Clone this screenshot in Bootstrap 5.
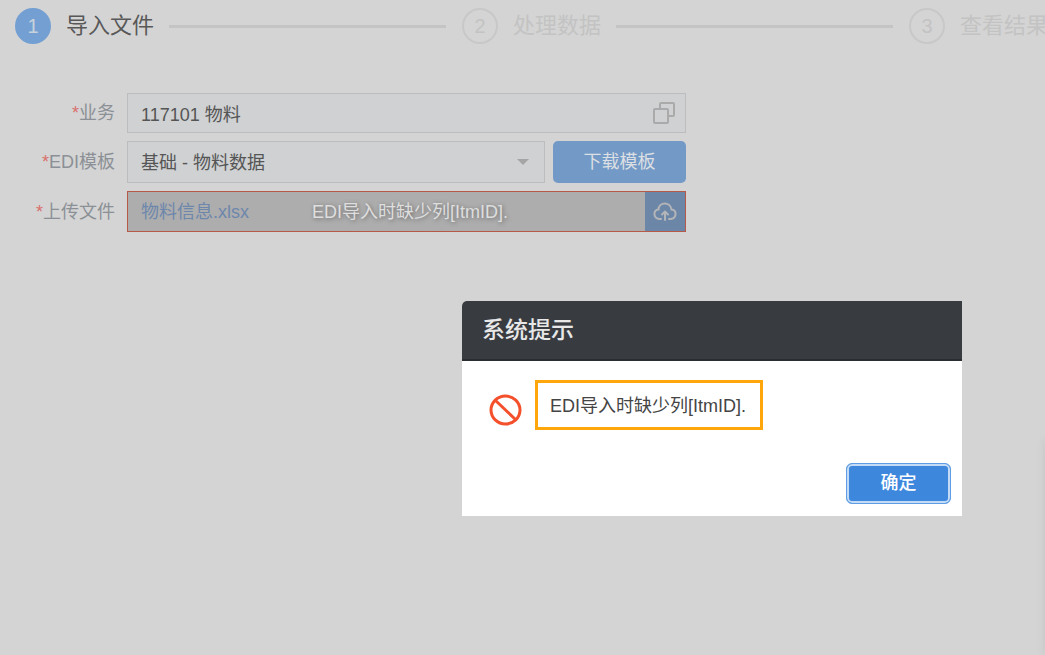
<!DOCTYPE html>
<html lang="zh-CN">
<head>
<meta charset="utf-8">
<meta name="viewport" content="width=device-width, initial-scale=1">
<title>导入文件</title>
<link href="https://cdn.jsdelivr.net/npm/bootstrap@5.3.0/dist/css/bootstrap.min.css" rel="stylesheet">
<style>
  body { background: #d4d4d4; color: #555; font-family: "Liberation Sans", "Noto Sans CJK SC", sans-serif; font-size: 18px; line-height: 26px; min-height: 100vh; }
  /* step bar */
  .steps { padding: 8px 0 0 15px; margin-right: -3px; color: #c3c3c3; font-size: 22px; line-height: 36px; }
  .step-title { margin-left: 15px; }
  .step-no { width: 36px; height: 36px; border: 2px solid #c8c8c8; font-size: 20px; }
  .step-on .step-no { background: #739fd2; border-color: #739fd2; color: #c9d2dc; }
  .step-on .step-title { color: #585858; }
  .step-line { height: 3px; background: #c4c4c4; margin: 0 16px 0 15px; }
  /* form */
  .import-form { width: 686px; max-width: 100%; padding-top: 49px; gap: 8px; }
  .form-line { gap: 12px; }
  .field-label { width: 115px; color: #8b9096; text-align: right; }
  .field-label span { color: #d9706c; }
  .field { height: 40px; border: 1px solid #bcbdbe; background-color: #cfd1d3; color: #555; border-radius: 0; font-size: 18px; padding: 0 13px; }
  .field-tall { height: 42px; padding-top: 2px; }
  select.field { background-image: url("data:image/svg+xml,%3Csvg xmlns='http://www.w3.org/2000/svg' viewBox='0 0 12 6'%3E%3Cpath d='M0 0h12L6 6z' fill='%23a5a5a5'/%3E%3C/svg%3E"); background-size: 12px 6px; background-position: right 15px center; }
  .pick { right: 10px; color: #aaa; }
  .btn-template { width: 133px; height: 42px; background: #739ac6; color: #dcdfe3; font-size: 18px; border: 0; border-radius: 5px; }
  .upload { height: 41px; border: 1px solid #b55a48; background: #adadad; }
  .upload a { color: #6d87ac; padding-left: 13px; }
  .upload-error { color: #dedede; text-shadow: 1px 1px 4px #666; pointer-events: none; right: 177px; }
  .btn-upload { width: 40px; background: #6b86a6; color: #b3b5b8; }
  /* message dialog */
  .dialog-layer { padding: 301px 83px 0 0; pointer-events: none; }
  .message-box { width: 500px; border: 0; border-radius: 5px 0 0 0; background: #fff; pointer-events: auto; }
  .message-head { background: #383c41; border-bottom: 2px solid #2a2e33; padding: 0 20px; height: 60px; border-radius: 5px 0 0 0; }
  .message-head h1 { font-size: 23px; line-height: 32px; color: #e8e8e8; font-weight: 500; }
  .message-body { padding: 19px 27px 0; gap: 13px; }
  .message-text { border: 3px solid #ffa60a; padding: 10px 12px; height: 50px; width: 228px; color: #444; white-space: nowrap; }
  .message-foot { padding: 33px 11px 12px; }
  .btn-ok { width: 105px; height: 41px; background: #3d87dc; color: #fff; border: 1px solid #5f9de3; border-radius: 6px; box-shadow: inset 0 0 0 2px #c3dbf6; font-size: 18px; font-weight: 500; }
  .side-panel { right: -10px; top: 440px; bottom: 0; width: 10px; box-shadow: 0 0 8px #c4c4c4; }
</style>
</head>
<body class="position-relative overflow-hidden">
<main>
  <div class="steps d-flex align-items-center text-nowrap">
    <div class="step-on d-flex flex-shrink-0"><span class="step-no rounded-circle d-flex align-items-center justify-content-center">1</span><span class="step-title">导入文件</span></div>
    <div class="step-line flex-fill"></div>
    <div class="d-flex flex-shrink-0"><span class="step-no rounded-circle d-flex align-items-center justify-content-center">2</span><span class="step-title">处理数据</span></div>
    <div class="step-line flex-fill"></div>
    <div class="d-flex flex-shrink-0"><span class="step-no rounded-circle d-flex align-items-center justify-content-center">3</span><span class="step-title">查看结果</span></div>
  </div>

  <form class="import-form d-flex flex-column">
    <div class="form-line d-flex align-items-center">
      <label class="field-label flex-shrink-0" for="biz"><span>*</span>业务</label>
      <div class="position-relative flex-fill">
        <input id="biz" type="text" class="form-control field" value="117101 物料">
        <button type="button" class="pick btn p-0 border-0 position-absolute top-50 translate-middle-y d-flex" aria-label="选择业务">
          <svg width="24" height="24" viewBox="0 0 24 24" fill="none" stroke="currentColor" stroke-width="2"><rect x="2" y="8" width="14" height="14" rx="1"/><path d="M8 8V3q0-1 1-1h12q1 0 1 1v11q0 1-1 1h-5"/></svg>
        </button>
      </div>
    </div>
    <div class="form-line d-flex align-items-center">
      <label class="field-label flex-shrink-0" for="tpl"><span>*</span>EDI模板</label>
      <div class="d-flex flex-fill gap-2">
        <select id="tpl" class="form-select field field-tall"><option>基础 - 物料数据</option></select>
        <button type="button" class="btn btn-template p-0 flex-shrink-0">下载模板</button>
      </div>
    </div>
    <div class="form-line d-flex align-items-center">
      <label class="field-label flex-shrink-0" for="upload"><span>*</span>上传文件</label>
      <div class="upload d-flex flex-fill align-items-center position-relative">
        <a href="#" class="text-decoration-none">物料信息.xlsx</a>
        <span class="upload-error position-absolute">EDI导入时缺少列[ItmID].</span>
        <button id="upload" type="button" class="btn btn-upload rounded-0 border-0 p-0 ms-auto align-self-stretch d-flex align-items-center justify-content-center" aria-label="上传">
          <svg width="24" height="22" viewBox="0 0 24 22" fill="none" stroke="currentColor" stroke-width="2" stroke-linecap="round"><path d="M8 18H6C0 17 0 9 5.500 8.500C6 .5 17.500 .5 18.500 8.500C24 9 24 17 18 18H16"/><path d="M12 19v-8M9 13.500l3-3 3 3" stroke-linejoin="round"/></svg>
        </button>
      </div>
    </div>
  </form>
</main>

<div class="dialog-layer position-absolute top-0 end-0">
  <section class="modal-content message-box" role="dialog" aria-labelledby="msg-title">
    <header class="message-head d-flex align-items-center"><h1 id="msg-title" class="m-0">系统提示</h1></header>
    <div class="message-body d-flex align-items-center">
      <svg class="mt-2 flex-shrink-0" width="33" height="34" viewBox="0 -2 33 34" fill="none" stroke="#f4502c" stroke-width="3"><ellipse cx="16.500" cy="16" rx="14.500" ry="14"/><path d="M6 6l21 20"/></svg>
      <div class="message-text">EDI导入时缺少列[ItmID].</div>
    </div>
    <footer class="message-foot d-flex justify-content-end"><button type="button" class="btn btn-ok p-0">确定</button></footer>
  </section>
</div>
<aside class="side-panel position-absolute"></aside>
<script src="https://cdn.jsdelivr.net/npm/bootstrap@5.3.0/dist/js/bootstrap.bundle.min.js"></script>
</body>
</html>
